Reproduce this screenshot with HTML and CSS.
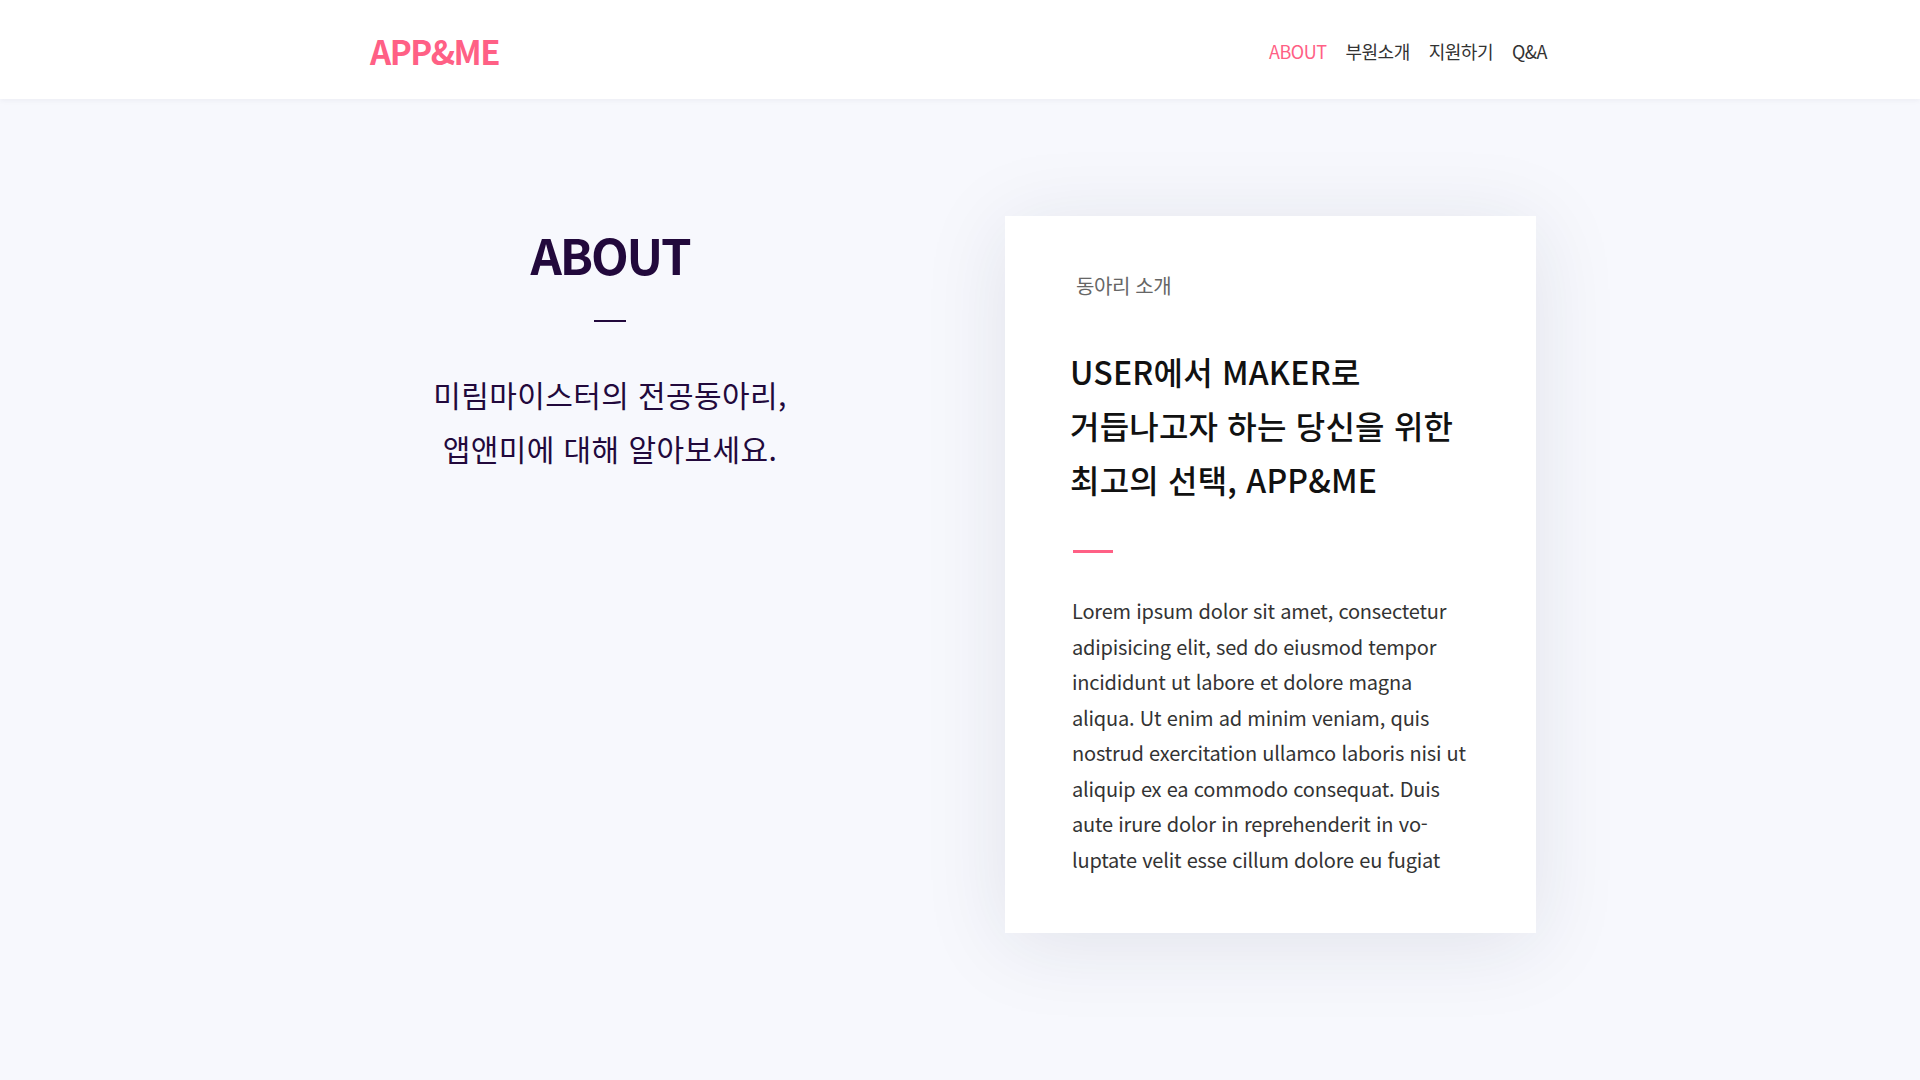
FILE: index.html
```html
<!DOCTYPE html>
<html lang="ko">
<head>
<meta charset="utf-8">
<title>APP&amp;ME - ABOUT</title>
<link rel="stylesheet" href="styles.css">
</head>
<body>
<header class="header">
  <div class="container header-inner">
    <a class="logo" href="#">APP&amp;ME</a>
    <nav class="nav">
      <a class="nav-item active" href="#">ABOUT</a>
      <a class="nav-item" href="#">부원소개</a>
      <a class="nav-item" href="#">지원하기</a>
      <a class="nav-item" href="#">Q&amp;A</a>
    </nav>
  </div>
</header>
<main class="container about">
  <section class="about-left">
    <h1 class="about-title">ABOUT</h1>
    <div class="about-rule"></div>
    <p class="about-sub">미림마이스터의 전공동아리,<br>앱앤미에 대해 알아보세요.</p>
  </section>
  <section class="card">
    <p class="card-label">동아리 소개</p>
    <h2 class="card-title">USER에서 MAKER로<br>거듭나고자 하는 당신을 위한<br>최고의 선택, APP&amp;ME</h2>
    <div class="card-rule"></div>
    <p class="card-text">Lorem ipsum dolor sit amet, consectetur adipisicing elit, sed do eiusmod tempor incididunt ut labore et dolore magna aliqua. Ut enim ad minim veniam, quis nostrud exercitation ullamco laboris nisi ut aliquip ex ea commodo consequat. Duis aute irure dolor in reprehenderit in vo-luptate velit esse cillum dolore eu fugiat</p>
  </section>
</main>
</body>
</html>
```
FILE: styles.css
```css
* { box-sizing: border-box; }
html, body { margin: 0; padding: 0; }
body {
  background: #f7f8fd;
  font-family: "Noto Sans CJK KR", "Noto Sans", sans-serif;
  color: #333;
  min-height: 1080px;
}
a { text-decoration: none; }
.container {
  width: 1180px;
  margin: 0 auto;
}
.header {
  background: #fff;
  height: 99px;
  box-shadow: 0 1px 6px rgba(30, 30, 60, 0.06);
  position: relative;
  z-index: 1;
}
.header-inner {
  height: 99px;
  padding-top: 3px;
  display: flex;
  align-items: center;
  justify-content: space-between;
}
.logo {
  font-size: 33px;
  font-weight: 700;
  color: #ff6085;
  letter-spacing: -1.5px;
}
.nav {
  display: flex;
  gap: 19px;
  margin-right: 3px;
}
.nav-item {
  font-size: 18px;
  color: #333;
  letter-spacing: -0.5px;
}
.nav-item.active { color: #ff6085; }

.about {
  display: flex;
  align-items: flex-start;
  padding-top: 117px;
  padding-bottom: 100px;
}
.about-left {
  width: 480px;
  flex: none;
  margin-top: 8px;
  display: flex;
  flex-direction: column;
  align-items: center;
  color: #22093c;
}
.about-title {
  margin: 0;
  font-size: 49px;
  line-height: 60px;
  font-weight: 700;
  letter-spacing: -2.2px;
}
.about-rule {
  width: 32px;
  height: 2px;
  background: #22093c;
  margin-top: 36px;
}
.about-sub {
  margin: 45px 0 0;
  font-size: 30px;
  line-height: 54px;
  text-align: center;
  letter-spacing: 0.4px;
}
.card {
  width: 531px;
  flex: none;
  margin-left: 155px;
  background: #fff;
  box-shadow: 0 10px 80px rgba(30, 35, 70, 0.1);
  padding: 56px 63px 56px 67px;
}
.card-label {
  margin: 0 0 0 4px;
  font-size: 20px;
  line-height: 27px;
  color: #666;
  letter-spacing: -0.4px;
}
.card-title {
  margin: 45px 0 0 -2px;
  font-size: 32px;
  line-height: 54px;
  font-weight: 500;
  color: #111;
  letter-spacing: 0.2px;
}
.card-rule {
  width: 40px;
  height: 3px;
  background: #ff6085;
  margin: 44px 0 0 1px;
}
.card-text {
  margin: 40px 0 0;
  width: 400px;
  font-size: 20px;
  line-height: 35.5px;
  color: #333;
  letter-spacing: -0.2px;
}
```
